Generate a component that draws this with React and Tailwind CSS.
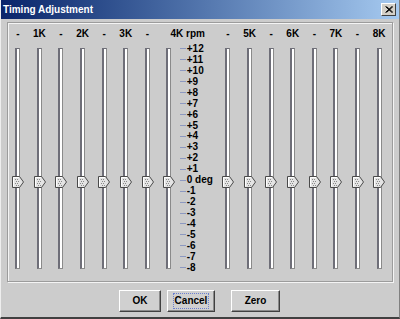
const LEFT = ['-', '1K', '-', '2K', '-', '3K', '-'];
const RIGHT = ['-', '5K', '-', '6K', '-', '7K', '-', '8K'];
const SCALE = [
  '+12', '+11', '+10', '+9', '+8', '+7', '+6', '+5', '+4', '+3', '+2', '+1',
  '0 deg', '-1', '-2', '-3', '-4', '-5', '-6', '-7', '-8',
];

function Thumb() {
  return (
    <svg width="12" height="13" viewBox="0 0 12 13" className="absolute left-[5px] top-[133px]">
      <polygon points="0.5,0.5 7.5,0.5 11.5,6 7.5,11.5 0.5,11.5" fill="#e4e4e4" stroke="#4a4a4a" />
      <polyline points="1.5,10.5 1.5,1.5 7,1.5" fill="none" stroke="#ffffff" />
      {[[3, 3], [5, 3], [4, 5], [3, 7], [5, 7], [4, 9], [6, 5], [6, 9]].map(([x, y], i) => (
        <rect key={i} x={x} y={y} width="1" height="1" fill="#8a8a8a" />
      ))}
    </svg>
  );
}

function Slider() {
  return (
    <div className="relative w-[21.6px] flex justify-center">
      <div className="mt-[5px] h-[221px] w-[5px] border-l-2 border-t border-r border-b border-l-[#6e6e78] border-t-[#6e6e78] border-r-[#8a8a8a] border-b-[#8a8a8a] bg-white" />
      <Thumb />
    </div>
  );
}

function Button({ children, focus }) {
  return (
    <div className="h-[22px] flex items-center justify-center bg-[#d0d0d0] border border-t-white border-l-white border-r-[#404040] border-b-[#404040] shadow-[inset_-1px_-1px_0_#8a8a8a]">
      <span className={focus ? 'leading-[12px] outline outline-1 outline-dotted outline-[#6b7fd0] outline-offset-[1px]' : 'leading-[12px]'}>
        {children}
      </span>
    </div>
  );
}

export default function App() {
  return (
    <div
      className="w-[400px] h-[319px] bg-[#cccccc] border-l border-l-[#eeeeee] border-r border-r-[#808080] border-b-2 border-b-[#404040] flex flex-col text-[10px] font-bold text-black"
      style={{ fontFamily: '"Liberation Sans", Arial, sans-serif' }}
    >
      {/* Title bar */}
      <div className="h-[19px] shrink-0 flex items-center justify-between pl-[2px] pr-[3px] bg-gradient-to-r from-[#0a246a] to-[#a6caf0]">
        <span className="text-white text-[10px] font-bold">Timing Adjustment</span>
        <div className="w-[15px] h-[13px] bg-[#d4d0c8] border border-t-white border-l-white border-r-[#404040] border-b-[#404040] flex items-center justify-center">
          <svg width="8" height="7" viewBox="0 0 8 7">
            <path d="M0.5 0.5 L7 6.5 M7 0.5 L0.5 6.5 M1.5 0.5 L8 6.5 M8 0.5 L1.5 6.5" stroke="#000" strokeWidth="1" />
          </svg>
        </div>
      </div>

      {/* Panel */}
      <div className="mt-[3px] ml-[6px] w-[386px] h-[260px] border border-[#9c9c9c] shadow-[1px_1px_0_#f4f4f4,inset_1px_1px_0_#f4f4f4]">
        <div className="ml-[-1px] h-[20px] flex items-center">
          {LEFT.map((l, i) => (
            <div key={i} className="w-[21.6px] text-center">{l}</div>
          ))}
          <div className="w-[59px] text-center">4K rpm</div>
          {RIGHT.map((l, i) => (
            <div key={i} className="w-[21.6px] text-center">{l}</div>
          ))}
        </div>
        <div className="ml-[-1px] flex">
          {[0, 1, 2, 3, 4, 5, 6, 7].map((i) => (
            <Slider key={i} />
          ))}
          <div className="w-[37.4px] pt-[0.5px] flex flex-col">
            {SCALE.map((s) => (
              <div key={s} className="h-[10.95px] flex items-center">
                <div className="w-[6px] h-px bg-[#8c98c0]" />
                <span className="ml-[1px] leading-[10px] whitespace-nowrap">{s}</span>
              </div>
            ))}
          </div>
          {[0, 1, 2, 3, 4, 5, 6, 7].map((i) => (
            <Slider key={i} />
          ))}
        </div>
      </div>

      {/* Buttons */}
      <div className="mt-[8px] flex pl-[118px]">
        <div className="w-[42px]"><Button>OK</Button></div>
        <div className="w-[48px] ml-[6px]"><Button focus>Cancel</Button></div>
        <div className="w-[49px] ml-[16px]"><Button>Zero</Button></div>
      </div>
    </div>
  );
}
